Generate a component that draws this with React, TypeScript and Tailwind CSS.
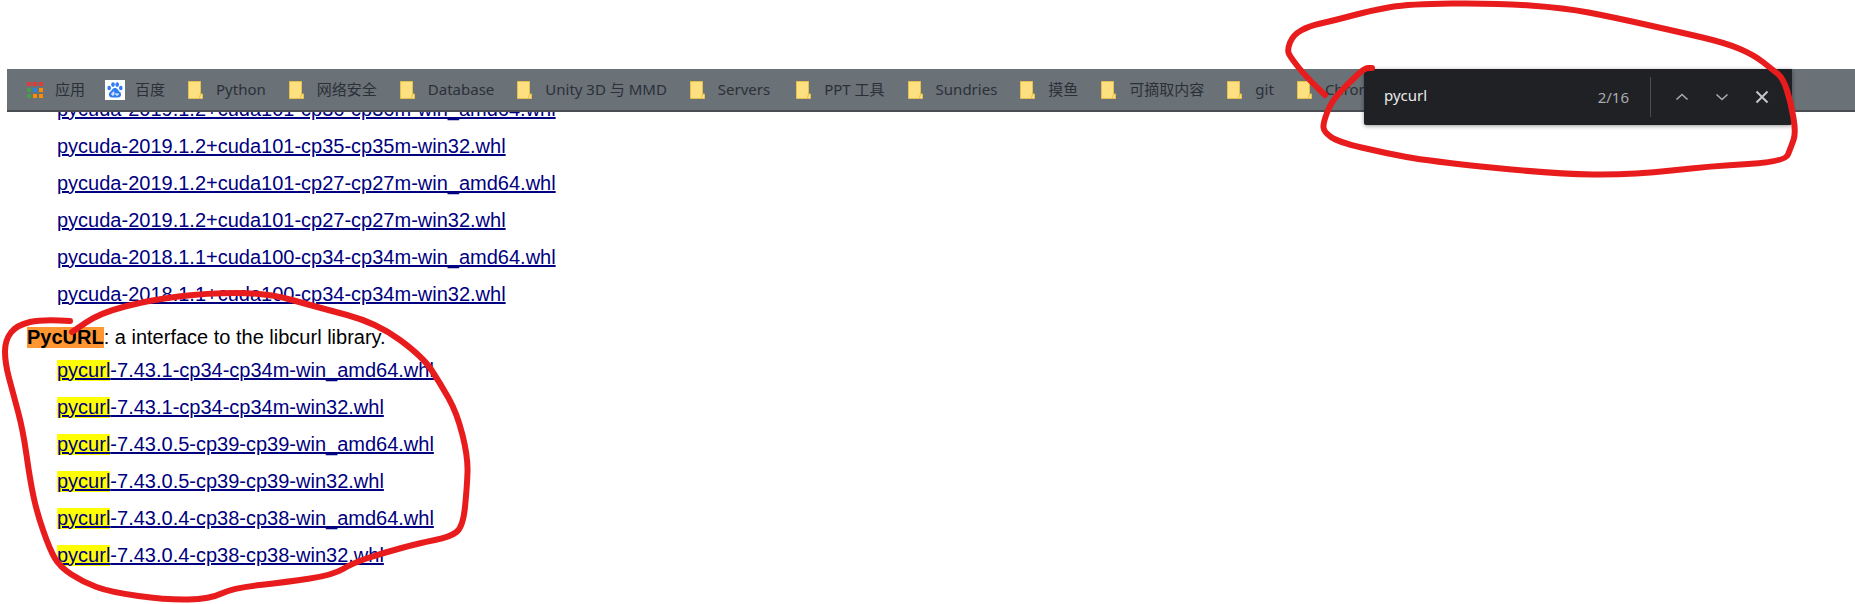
// Screenshot: browser bookmarks bar and find box over a list of wheel links, with red marker scribbles.
import { ReactNode } from 'react'

const PYCUDA = [
  'pycuda-2019.1.2+cuda101-cp36-cp36m-win_amd64.whl',
  'pycuda-2019.1.2+cuda101-cp35-cp35m-win32.whl',
  'pycuda-2019.1.2+cuda101-cp27-cp27m-win_amd64.whl',
  'pycuda-2019.1.2+cuda101-cp27-cp27m-win32.whl',
  'pycuda-2018.1.1+cuda100-cp34-cp34m-win_amd64.whl',
  'pycuda-2018.1.1+cuda100-cp34-cp34m-win32.whl',
]

const PYCURL = [
  '-7.43.1-cp34-cp34m-win_amd64.whl',
  '-7.43.1-cp34-cp34m-win32.whl',
  '-7.43.0.5-cp39-cp39-win_amd64.whl',
  '-7.43.0.5-cp39-cp39-win32.whl',
  '-7.43.0.4-cp38-cp38-win_amd64.whl',
  '-7.43.0.4-cp38-cp38-win32.whl',
]

const FOLDERS = [
  'Python',
  '网络安全',
  'Database',
  'Unity 3D 与 MMD',
  'Servers',
  'PPT 工具',
  'Sundries',
  '摸鱼',
  '可摘取内容',
  'git',
  'Chrome',
]

const TOP_LOOP: [number, number][] = [
  [1325, 95], [1307, 78], [1291, 58], [1287, 50], [1293, 35], [1309, 26], [1332, 21], [1373, 10], [1409, 4],
  [1495, 3], [1565, 8], [1612, 17], [1679, 32], [1726, 43], [1754, 55], [1773, 70], [1783, 78], [1791, 103],
  [1796, 133], [1791, 147], [1785, 162], [1711, 166], [1632, 175], [1554, 174], [1428, 161], [1385, 153],
  [1338, 142], [1324, 132], [1323, 123], [1332, 100], [1354, 78], [1365, 68], [1372, 68],
]

const LEFT_LOOP: [number, number][] = [
  [70, 321], [43, 319], [17, 325], [5, 340], [5, 363], [13, 393], [23, 430], [30, 480], [37, 513], [50, 550],
  [60, 567], [83, 582], [110, 592], [167, 600], [210, 599], [233, 588], [287, 582], [333, 575], [353, 563],
  [383, 553], [420, 543], [450, 537], [463, 527], [467, 487], [468, 457], [457, 413], [440, 383], [423, 357],
  [377, 323], [317, 307], [267, 293], [207, 293], [150, 300], [100, 313], [72, 332],
]

// Smooth a list of points with quadratic segments through the midpoints.
function scribble(points: [number, number][]): string {
  let d = `M${points[0][0]} ${points[0][1]}`
  for (let i = 1; i < points.length - 1; i++) {
    const [x, y] = points[i]
    const [nx, ny] = points[i + 1]
    d += ` Q${x} ${y} ${(x + nx) / 2} ${(y + ny) / 2}`
  }
  const last = points[points.length - 1]
  return `${d} L${last[0]} ${last[1]}`
}

function FolderIcon() {
  return (
    <svg width="15" height="18" viewBox="0 0 15 18" className="shrink-0">
      <path d="M0.5 0.5H12.5V13H14.5V17.5H0.5Z" fill="#ffe081" stroke="#e5c04f" />
      <path d="M12.5 13L11.5 17" fill="none" stroke="#e5c04f" />
    </svg>
  )
}

function AppsIcon() {
  const colors = ['#e53935', '#e53935', '#e53935', '#43a047', '#1e88e5', '#fb8c00', '#43a047', '#fb8c00', '#fb8c00']
  return (
    <div className="grid w-[16px] shrink-0 grid-cols-3 gap-[2px]">
      {colors.map((c, i) => (
        <span key={i} className="h-[4px] w-[4px]" style={{ background: c }} />
      ))}
    </div>
  )
}

function BaiduIcon() {
  return (
    <svg width="20" height="20" viewBox="0 0 20 20" className="shrink-0">
      <rect width="20" height="20" fill="#fff" />
      <g fill="#2f7cf0">
        <ellipse cx="4.2" cy="8" rx="1.8" ry="2.3" />
        <ellipse cx="8" cy="4.6" rx="1.8" ry="2.4" />
        <ellipse cx="12.2" cy="4.6" rx="1.8" ry="2.4" />
        <ellipse cx="15.8" cy="8" rx="1.8" ry="2.3" />
        <path d="M10 8C7.5 8 7 10.5 5 12C3 13.8 3.8 17.5 7 17.5H13C16.2 17.5 17 13.8 15 12C13 10.5 12.5 8 10 8Z" />
      </g>
      <path d="M8.8 11.5V15H7V13H8.8M11 13V15H13V13" fill="none" stroke="#fff" strokeWidth="1" />
    </svg>
  )
}

function BarItem({ icon, label, className = 'gap-[13px]' }: { icon: ReactNode; label: string; className?: string }) {
  return (
    <div className={`flex shrink-0 items-center ${className}`}>
      {icon}
      <span className="whitespace-nowrap">{label}</span>
    </div>
  )
}

function FileLink({ children }: { children: ReactNode }) {
  return (
    <li className="h-[37px] leading-[37px]">
      <a href="#" className="text-[#000080] underline">
        {children}
      </a>
    </li>
  )
}

export default function App() {
  return (
    <div className="relative h-[604px] w-[1855px] overflow-hidden bg-white font-['Liberation_Sans',Arial,sans-serif] text-[20px] text-black">
      <main className="pt-[91px] pl-[27px]">
        <ul className="pl-[30px]">
          {PYCUDA.map((name) => (
            <FileLink key={name}>{name}</FileLink>
          ))}
        </ul>
        <p className="mt-[6px] h-[33px] leading-[37px]">
          <span className="inline-block h-[21px] bg-[#ff9632] leading-[21px] font-bold">PycURL</span>: a interface to the
          libcurl library.
        </p>
        <ul className="pl-[30px]">
          {PYCURL.map((rest) => (
            <FileLink key={rest}>
              <span className="inline-block h-[21px] bg-[#ffff00] leading-[21px] underline">pycurl</span>
              {rest}
            </FileLink>
          ))}
        </ul>
      </main>

      <div className="absolute top-[69px] right-0 left-[7px] flex h-[43px] items-center gap-[23px] overflow-hidden border-b-2 border-[#4a4e52] bg-[#6a7177] pl-[20px] font-['Noto_Sans','Noto_Sans_CJK_SC',sans-serif] text-[15px] text-[#2b3038]">
        <BarItem icon={<AppsIcon />} label="应用" className="mr-[-3px] gap-[12px]" />
        <BarItem icon={<BaiduIcon />} label="百度" className="gap-[10px]" />
        {FOLDERS.map((name) => (
          <BarItem key={name} icon={<FolderIcon />} label={name} className={name === 'Servers' ? 'mr-[3px] gap-[13px]' : undefined} />
        ))}
      </div>

      <div className="absolute top-[69px] left-[1364px] flex h-[56px] w-[428px] items-center rounded-b-[2px] bg-[#202124] font-['Noto_Sans','Noto_Sans_CJK_SC',sans-serif] text-[15px] shadow-[0_1px_4px_rgba(0,0,0,0.4)]">
        <span className="ml-[20px] flex-1 pb-[3px] text-[#e8eaed]">pycurl</span>
        <span className="text-[#a8abaf]">2/16</span>
        <div className="mx-[21px] h-[40px] w-px bg-[#4a4c50]" />
        <div className="flex items-center gap-[20px] pr-[20px] text-[#a8abaf]">
          <svg width="20" height="20" viewBox="0 0 20 20" fill="none" stroke="currentColor" strokeWidth="1.6">
            <path d="M4.5 12.5L10 7.5L15.5 12.5" />
          </svg>
          <svg width="20" height="20" viewBox="0 0 20 20" fill="none" stroke="currentColor" strokeWidth="1.6">
            <path d="M4.5 7.5L10 12.5L15.5 7.5" />
          </svg>
          <svg width="20" height="20" viewBox="0 0 20 20" fill="none" stroke="#c4c6c9" strokeWidth="2">
            <path d="M4.5 4.5L15.5 15.5M15.5 4.5L4.5 15.5" />
          </svg>
        </div>
      </div>

      <svg className="pointer-events-none absolute inset-0" width="1855" height="604" fill="none" stroke="#e81c1c" strokeWidth="6" strokeLinecap="round" strokeLinejoin="round">
        <path d={scribble(TOP_LOOP)} />
        <path d={scribble(LEFT_LOOP)} />
      </svg>
    </div>
  )
}
